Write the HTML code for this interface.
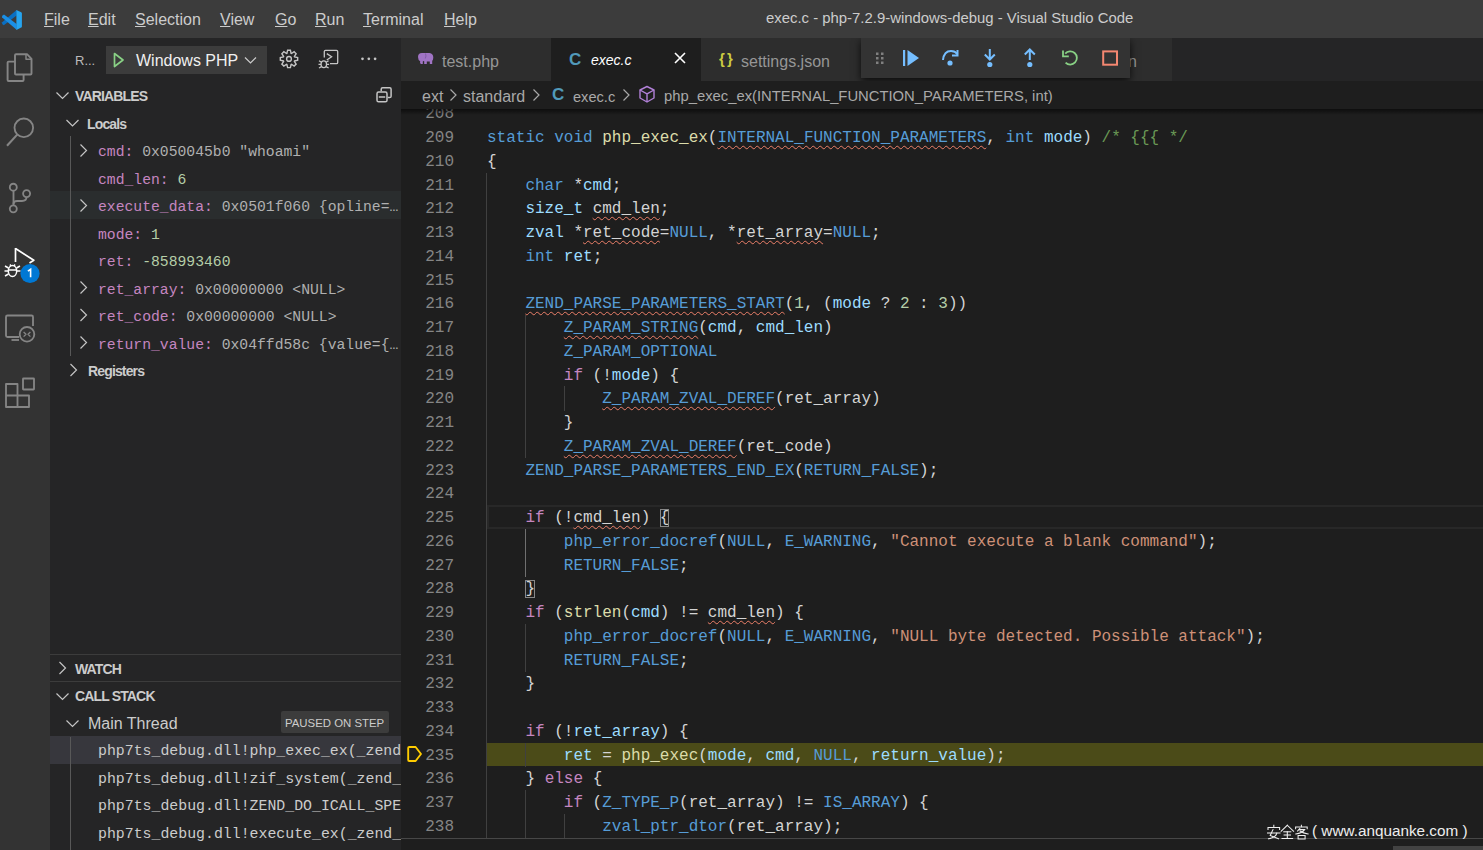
<!DOCTYPE html>
<html><head><meta charset="utf-8">
<style>
*{margin:0;padding:0;box-sizing:border-box}
html,body{width:1483px;height:850px;overflow:hidden;background:#1e1e1e}
body{position:relative;font-family:"Liberation Sans",sans-serif;color:#cccccc}
.abs{position:absolute}
svg{position:absolute;overflow:visible}
#title{left:0;top:0;width:1483px;height:38px;background:#3c3c3c}
.menu{position:absolute;top:11px;font-size:16px;line-height:17px;color:#cccccc;white-space:nowrap}
.menu u{text-decoration:underline;text-underline-offset:1px;text-decoration-thickness:1px}
#wtitle{position:absolute;top:10px;left:766px;font-size:14.9px;line-height:17px;color:#cccccc;white-space:nowrap}
#act{left:0;top:38px;width:50px;height:812px;background:#333333}
#side{left:50px;top:38px;width:351px;height:812px;background:#252526;overflow:hidden}
#editor{left:401px;top:38px;width:1082px;height:812px;background:#1e1e1e;overflow:hidden}
#tabs{left:0;top:0;width:1082px;height:43px;background:#252526}
.tab{position:absolute;top:0;height:43px;background:#2d2d2d;white-space:nowrap}
.tab.active{background:#1e1e1e}
.tabt{position:absolute;top:14.5px;font-size:16px;line-height:17px;color:#969696;white-space:nowrap}
#crumbs{left:0;top:43px;width:1082px;height:28px;background:#1e1e1e;white-space:nowrap}
.cr{position:absolute;top:7px;font-size:16px;line-height:17px;color:#a9a9a9;white-space:nowrap}
.code{font-family:"Liberation Mono",monospace;font-size:16px;white-space:pre;line-height:23.75px}
.ln{position:absolute;left:0;width:53px;text-align:right;color:#858585;height:23.75px}
.line{position:absolute;left:86px;height:23.75px}
.k{color:#569cd6}.f{color:#dcdcaa}.v{color:#9cdcfe}.p{color:#d4d4d4}.c{color:#c586c0}.n{color:#b5cea8}.s{color:#ce9178}.cm{color:#6a9955}.w{color:#d4d4d4}
.sq{text-decoration:underline wavy #ec7f69;text-decoration-thickness:1px;text-underline-offset:3px;text-decoration-skip-ink:none}
.bm{outline:1px solid #888888;outline-offset:-1px}
.hdr{position:absolute;font-weight:bold;font-size:14px;letter-spacing:-0.85px;line-height:15px;margin-top:1px;color:#cccccc;white-space:nowrap}
.row{position:absolute;left:0;width:351px;height:27.5px}
.var{position:absolute;left:48px;margin-top:3px;font-family:"Liberation Mono",monospace;font-size:14.73px;line-height:27.5px;white-space:pre}
.vn{color:#c586c0}.vv{color:#b0b0b0}.vnum{color:#b5cea8}.vp{color:#c586c0}
.frame{position:absolute;left:48px;margin-top:2px;font-family:"Liberation Mono",monospace;font-size:14.87px;line-height:27.5px;white-space:pre;color:#cccccc}
.ic{stroke:#c5c5c5;fill:none;stroke-width:1.3}
</style></head>
<body>
<div id="title" class="abs">
  <svg style="left:0;top:0" width="28" height="38" viewBox="0 0 28 38">
    <path d="M16.6 10 L2.2 22.3 Q1.6 23.3 2.6 24.4 L3.8 25.2 L16.6 15.6 Z" fill="#0a6fc2"/>
    <path d="M2.6 15.4 Q1.6 16.4 2.2 17.4 L16.6 29.8 V24 L4 14.6 Z" fill="#1a8fe6"/>
    <path d="M16.4 10 L21.2 12.3 Q21.9 12.7 21.9 13.5 V26.4 Q21.9 27.2 21.2 27.6 L16.4 29.9 Z" fill="#26a5f0"/>
  </svg>
  <div class="menu" style="left:44px"><u>F</u>ile</div>
  <div class="menu" style="left:88px"><u>E</u>dit</div>
  <div class="menu" style="left:135px"><u>S</u>election</div>
  <div class="menu" style="left:220px"><u>V</u>iew</div>
  <div class="menu" style="left:275px"><u>G</u>o</div>
  <div class="menu" style="left:315px"><u>R</u>un</div>
  <div class="menu" style="left:363px"><u>T</u>erminal</div>
  <div class="menu" style="left:444px"><u>H</u>elp</div>
  <div id="wtitle">exec.c - php-7.2.9-windows-debug - Visual Studio Code</div>
</div>

<div id="act" class="abs">
  <!-- explorer -->
  <svg style="left:0;top:0" width="50" height="400" viewBox="0 38 50 400">
    <g stroke="#858585" stroke-width="1.85" fill="none" stroke-linejoin="round">
      <path d="M15 61.6 H8.6 Q7.6 61.6 7.6 62.6 V80 Q7.6 81 8.6 81 H22.6 Q23.6 81 23.6 80 V75" stroke-width="1.9"/>
      <path d="M15 55.2 Q15 54.2 16 54.2 H27 L31.5 58.8 V73.5 Q31.5 74.5 30.5 74.5 H16 Q15 74.5 15 73.5 Z" stroke-width="1.9"/>
      <path d="M26 54.5 V59.3 H31" stroke-width="1.5"/>
      <!-- search -->
      <circle cx="23.8" cy="127.8" r="9.3"/>
      <path d="M17.2 134.6 L7 145.8" stroke-width="2.1"/>
      <!-- scm -->
      <circle cx="13.3" cy="187.2" r="3.5"/>
      <circle cx="13.3" cy="208.8" r="3.5"/>
      <circle cx="26.6" cy="193.6" r="3.5"/>
      <path d="M13.5 190.3 V205.2"/>
      <path d="M26.5 197.3 Q26.5 201 22 201 H17 Q13.5 201 13.5 204"/>
      <!-- remote explorer -->
      <path d="M19 337 H7.5 Q6 337 6 335.5 V317 Q6 315.5 7.5 315.5 H31.5 Q33 315.5 33 317 V326"/>
      <path d="M11.5 340 H19"/>
      <circle cx="27" cy="334.3" r="7.3"/>
      <path d="M23.6 332 L26 334.3 L23.6 336.6 M30.4 332 L28 334.3 L30.4 336.6" stroke-width="1.3"/>
      <!-- extensions -->
      <path d="M6 384 H17.5 V395.5 H29 V407 H6 Z M6 395.5 H17.5 V407"/>
      <rect x="23" y="378.5" width="11" height="11" rx="0.5"/>
    </g>
    <!-- debug active -->
    <g stroke="#ffffff" stroke-width="1.7" fill="none" stroke-linejoin="round">
      <path d="M15.5 248.5 L33.8 260.3 L29.5 263"/>
      <path d="M15.5 248 V262"/>
    </g>
    <g stroke="#ffffff" stroke-width="1.5" fill="none">
      <ellipse cx="12.5" cy="271" rx="4.2" ry="5.5"/>
      <path d="M8.3 270 H16.7 M5 266 L8.5 268 M5 276 L8.5 274 M20 266 L16.5 268 M4.5 271 H8 M17 271 H20.5 M10 264.5 L11 266 M15 264.5 L14 266"/>
    </g>
    <circle cx="30" cy="273.5" r="9.6" fill="#0078d4"/>
    <path d="M27.9 271.2 L30.6 269.3 V277.2" fill="none" stroke="#ffffff" stroke-width="1.6" stroke-linejoin="miter"/>
    
  </svg>
</div>

<div id="side" class="abs">
  <div class="abs" style="left:25px;top:15px;font-size:13px;line-height:15px;color:#bbbbbb">R...</div>
  <div class="abs" style="left:56px;top:8px;width:161px;height:28px;background:#3c3c3c"></div>
  <svg style="left:0;top:0" width="351" height="60">
    <path d="M64.5 15.5 L73 22 L64.5 28.5 Z" fill="none" stroke="#89d185" stroke-width="1.7" stroke-linejoin="round"/>
    <path d="M195 19.5 L200.5 25 L206 19.5" fill="none" stroke="#cccccc" stroke-width="1.2"/>
  </svg>
  <div class="abs" style="left:86px;top:14px;font-size:16px;line-height:17px;color:#f0f0f0">Windows PHP</div>
  <svg style="left:0;top:0" width="351" height="80">
    <!-- gear -->
    <g fill="none" stroke="#c5c5c5" stroke-width="1.4" stroke-linejoin="miter">
      <path d="M236.92 15.38 L237.60 12.21 L240.40 12.21 L241.08 15.38 L241.43 15.53 L244.15 13.77 L246.13 15.75 L244.37 18.47 L244.52 18.82 L247.69 19.50 L247.69 22.30 L244.52 22.98 L244.37 23.33 L246.13 26.05 L244.15 28.03 L241.43 26.27 L241.08 26.42 L240.40 29.59 L237.60 29.59 L236.92 26.42 L236.57 26.27 L233.85 28.03 L231.87 26.05 L233.63 23.33 L233.48 22.98 L230.31 22.30 L230.31 19.50 L233.48 18.82 L233.63 18.47 L231.87 15.75 L233.85 13.77 L236.57 15.53 Z"/>
      <circle cx="239" cy="20.9" r="2.4"/>
    </g>
    <!-- debug console -->
    <g fill="none" stroke="#c5c5c5" stroke-width="1.3">
      <path d="M274.3 19.5 V13.5 Q274.3 12.3 275.5 12.3 H286.5 Q287.7 12.3 287.7 13.5 V24.5 Q287.7 25.7 286.5 25.7 H280"/>
      <path d="M276.8 15.6 L281.6 18.8 L276.8 22"/>
      <ellipse cx="273.8" cy="26.3" rx="2.7" ry="3.4"/>
      <path d="M269 22.8 L271.5 24.2 M269 30 L271.5 28.6 M278.6 22.8 L276.1 24.2 M278.6 30 L276.1 28.6 M268.5 26.3 H271 M276.6 26.3 H279.1"/>
    </g>
    <!-- ellipsis -->
    <g fill="#c5c5c5"><circle cx="312.5" cy="20.8" r="1.35"/><circle cx="318.8" cy="20.8" r="1.35"/><circle cx="325.1" cy="20.8" r="1.35"/></g>
  </svg>

  <!-- VARIABLES header -->
  <div class="row" style="top:153px;background:#2a2d2e"></div>
  <svg style="left:0;top:0" width="351" height="400">
    <g fill="none" stroke="#c5c5c5" stroke-width="1.2">
      <path d="M6.5 54.5 L12.5 60.5 L18.5 54.5"/>
      <path d="M16.5 82 L22.5 88 L28.5 82"/>
      <path d="M30.5 106.5 L36.5 112.5 L30.5 118.5"/>
      <path d="M30.5 161.5 L36.5 167.5 L30.5 173.5"/>
      <path d="M30.5 243.5 L36.5 249.5 L30.5 255.5"/>
      <path d="M30.5 271.0 L36.5 277.0 L30.5 283.0"/>
      <path d="M30.5 298.5 L36.5 304.5 L30.5 310.5"/>
      <path d="M20.5 326.0 L26.5 332.0 L20.5 338.0"/>
    </g>
    <g fill="none" stroke="#c5c5c5" stroke-width="1.5">
      <rect x="327" y="54.1" width="10" height="9.7" rx="1.6"/>
      <path d="M331.2 53.3 V51.2 Q331.2 49.8 332.6 49.8 H339.7 Q341.1 49.8 341.1 51.2 V58.2 Q341.1 59.6 339.7 59.6 H337.8"/>
      <path d="M328.8 59 H335.2"/>
    </g>
    <path d="M20.5 98 V318" stroke="#585858" stroke-width="1"/>
  </svg>
  <div class="hdr" style="left:25px;top:50px">VARIABLES</div>
  <div class="hdr" style="left:37px;top:78px">Locals</div>
  <div class="var" style="top:98px"><span class="vn">cmd</span><span class="vp">: </span><span class="vv">0x050045b0 "whoami"</span></div>
  <div class="var" style="top:125.5px"><span class="vn">cmd_len</span><span class="vp">: </span><span class="vnum">6</span></div>
  <div class="var" style="top:153px"><span class="vn">execute_data</span><span class="vp">: </span><span class="vv">0x0501f060 {opline=…</span></div>
  <div class="var" style="top:180.5px"><span class="vn">mode</span><span class="vp">: </span><span class="vnum">1</span></div>
  <div class="var" style="top:208px"><span class="vn">ret</span><span class="vp">: </span><span class="vnum">-858993460</span></div>
  <div class="var" style="top:235.5px"><span class="vn">ret_array</span><span class="vp">: </span><span class="vv">0x00000000 &lt;NULL&gt;</span></div>
  <div class="var" style="top:263px"><span class="vn">ret_code</span><span class="vp">: </span><span class="vv">0x00000000 &lt;NULL&gt;</span></div>
  <div class="var" style="top:290.5px"><span class="vn">return_value</span><span class="vp">: </span><span class="vv">0x04ffd58c {value={…</span></div>
  <div class="hdr" style="left:38px;top:325px">Registers</div>

  <!-- WATCH / CALL STACK -->
  <div class="abs" style="left:0;top:616px;width:351px;height:1px;background:#3c3c3c"></div>
  <div class="abs" style="left:0;top:643px;width:351px;height:1px;background:#3c3c3c"></div>
  <svg style="left:0;top:600px" width="351" height="250" viewBox="0 638 351 250">
    <g fill="none" stroke="#c5c5c5" stroke-width="1.2">
      <path d="M9.5 662.0 L15.5 668.0 L9.5 674.0"/>
      <path d="M6.5 693.5 L12.5 699.5 L18.5 693.5"/>
      <path d="M16.5 720.5 L22.5 726.5 L28.5 720.5"/>
    </g>
    <path d="M20.5 737 V850" stroke="#585858" stroke-width="1"/>
  </svg>
  <div class="hdr" style="left:25px;top:623px">WATCH</div>
  <div class="hdr" style="left:25px;top:650px">CALL STACK</div>
  <div class="abs" style="left:38px;top:677px;font-size:16px;line-height:17px;color:#cccccc">Main Thread</div>
  <div class="abs" style="left:231px;top:673px;width:108px;height:22px;background:#3c3c3c;border-radius:2px"></div>
  <div class="abs" style="left:235px;top:679px;font-size:11.4px;line-height:13px;color:#cccccc">PAUSED ON STEP</div>
  <div class="row" style="top:698px;background:#37373d"></div>
  <svg style="left:0;top:0" width="351" height="812"><path d="M20.5 699 V812" stroke="#585858" stroke-width="1"/></svg>
  <div class="frame" style="top:698px">php7ts_debug.dll!php_exec_ex(_zend</div>
  <div class="frame" style="top:725.5px">php7ts_debug.dll!zif_system(_zend_</div>
  <div class="frame" style="top:753px">php7ts_debug.dll!ZEND_DO_ICALL_SPE</div>
  <div class="frame" style="top:780.5px">php7ts_debug.dll!execute_ex(_zend_</div>
</div>

<div id="editor" class="abs">
  <div id="tabs" class="abs">
    <div class="tab" style="left:0;width:150px">
      <svg style="left:0;top:0" width="150" height="43">
        <path d="M17 19 Q17 15 21 15 H28.5 Q32.3 15.5 32.3 19.5 Q32.3 21.5 31.2 23 V26 H28.8 V23.6 H25.8 V26 H23.2 V23.2 Q22.3 22.8 21.8 23.4 V26 H19.8 Q18.6 25 19.2 23.3 Q17 22 17 19 Z" fill="#a074c4"/><path d="M24.5 15.5 Q25.6 18 24.3 20.5" stroke="#7a55a0" stroke-width="0.8" fill="none"/>
      </svg>
      <div class="tabt" style="left:41px">test.php</div>
    </div>
    <div class="tab active" style="left:150px;width:150px">
      <div class="abs" style="left:18px;top:13px;font-size:17px;line-height:18px;font-weight:bold;color:#519aba">C</div>
      <div class="tabt" style="left:40px;font-style:italic;font-size:14px;top:14px;color:#ffffff">exec.c</div>
      <svg style="left:0;top:0" width="150" height="43">
        <path d="M274 15 L284 25 M284 15 L274 25" transform="translate(-150,0)" stroke="#ffffff" stroke-width="1.6"/>
      </svg>
    </div>
    <div class="tab" style="left:300px;width:150px">
      <div class="abs" style="left:18px;top:12px;font-size:15px;line-height:17px;font-weight:bold;color:#cbcb41;letter-spacing:-1px">{ }</div>
      <div class="tabt" style="left:40px">settings.json</div>
    </div>
    <div class="tab" style="left:450px;width:321px">
      <div class="tabt" style="left:277px">n</div>
    </div>
    <!-- debug toolbar -->
    <div class="abs" style="left:460px;top:0;width:269px;height:40px;background:#333333;box-shadow:0 3px 8px rgba(0,0,0,0.75)">
      <svg style="left:0;top:0" width="269" height="40" viewBox="861 38 269 40">
        <g fill="#808080"><rect x="876" y="52.5" width="2.5" height="2.5"/><rect x="881" y="52.5" width="2.5" height="2.5"/><rect x="876" y="57" width="2.5" height="2.5"/><rect x="881" y="57" width="2.5" height="2.5"/><rect x="876" y="61.5" width="2.5" height="2.5"/><rect x="881" y="61.5" width="2.5" height="2.5"/></g>
        <g fill="#75beff" stroke="none">
          <rect x="903" y="50" width="2.2" height="16"/>
          <path d="M907.5 50 L919 58 L907.5 66 Z"/>
          <circle cx="950" cy="63" r="2.6"/>
          <circle cx="989.8" cy="64.5" r="2.6"/>
          <circle cx="1029.8" cy="64.5" r="2.6"/>
        </g>
        <g fill="none" stroke="#75beff" stroke-width="2">
          <path d="M943 60 Q944 51 951 51 Q955 51 957.5 54"/>
          <path d="M957.5 50 V55.5 H952"/>
          <path d="M989.8 49 V59.5 M984.8 54.5 L989.8 59.5 L994.8 54.5"/>
          <path d="M1029.8 60 V49.5 M1024.8 54.5 L1029.8 49.5 L1034.8 54.5"/>
        </g>
        <g fill="none" stroke="#89d185" stroke-width="1.8">
          <path d="M1065.6 62.6 A6.6 6.6 0 1 0 1065.2 53.7"/>
          <path d="M1063 50.5 V56.3 H1068.8"/>
        </g>
        <rect x="1103.2" y="51.4" width="13.8" height="13.3" fill="none" stroke="#f48771" stroke-width="2"/>
      </svg>
    </div>
  </div>
  <div id="crumbs" class="abs">
    <div class="cr" style="left:21px">ext</div>
    <svg style="left:0;top:0" width="300" height="27"><g fill="none" stroke="#a9a9a9" stroke-width="1.2"><path d="M49.5 8.5 L55 14 L49.5 19.5"/><path d="M132.5 8.5 L138 14 L132.5 19.5"/><path d="M222.5 8.5 L228 14 L222.5 19.5"/></g></svg>
    <div class="cr" style="left:62px">standard</div>
    <div class="abs" style="left:151px;top:5px;font-size:17px;line-height:18px;font-weight:bold;color:#519aba">C</div>
    <div class="cr" style="left:172px;font-size:14.6px;top:7.5px">exec.c</div>
    <svg style="left:0;top:0" width="300" height="27">
      <g fill="none" stroke="#b180d7" stroke-width="1.4" stroke-linejoin="round">
        <path d="M246 5.5 L253 9 V17 L246 21 L239 17 V9 Z"/>
        <path d="M239 9 L246 12.8 L253 9 M246 12.8 V21"/>
      </g>
    </svg>
    <div class="cr" style="left:263px;font-size:14.8px">php_exec_ex(INTERNAL_FUNCTION_PARAMETERS, int)</div>
  </div>
  <div class="abs" style="left:0;top:71px;width:1082px;height:741px;overflow:hidden">
    <div class="abs" style="left:0;top:0;width:1082px;height:6px;background:linear-gradient(rgba(0,0,0,0.55),rgba(0,0,0,0));z-index:5"></div>
    <div class="abs" style="left:0;top:-71px;width:1082px;height:812px">
<div class="abs" style="left:85px;top:704.500px;width:1000px;height:23.75px;background:#4b4b18"></div>
<div class="abs" style="left:86px;top:467.000px;width:1000px;height:23.75px;border:2px solid #282828;border-right:none"></div>
<div class="abs" style="left:85.0px;top:134.500px;width:1px;height:24.25px;background:#404040"></div>
<div class="abs" style="left:85.0px;top:158.250px;width:1px;height:24.25px;background:#404040"></div>
<div class="abs" style="left:85.0px;top:182.000px;width:1px;height:24.25px;background:#404040"></div>
<div class="abs" style="left:85.0px;top:205.750px;width:1px;height:24.25px;background:#404040"></div>
<div class="abs" style="left:85.0px;top:229.500px;width:1px;height:24.25px;background:#404040"></div>
<div class="abs" style="left:85.0px;top:253.250px;width:1px;height:24.25px;background:#404040"></div>
<div class="abs" style="left:85.0px;top:277.000px;width:1px;height:24.25px;background:#404040"></div>
<div class="abs" style="left:124.4px;top:277.000px;width:1px;height:24.25px;background:#404040"></div>
<div class="abs" style="left:85.0px;top:300.750px;width:1px;height:24.25px;background:#404040"></div>
<div class="abs" style="left:124.4px;top:300.750px;width:1px;height:24.25px;background:#404040"></div>
<div class="abs" style="left:85.0px;top:324.500px;width:1px;height:24.25px;background:#404040"></div>
<div class="abs" style="left:124.4px;top:324.500px;width:1px;height:24.25px;background:#404040"></div>
<div class="abs" style="left:85.0px;top:348.250px;width:1px;height:24.25px;background:#404040"></div>
<div class="abs" style="left:124.4px;top:348.250px;width:1px;height:24.25px;background:#404040"></div>
<div class="abs" style="left:162.8px;top:348.250px;width:1px;height:24.25px;background:#404040"></div>
<div class="abs" style="left:85.0px;top:372.000px;width:1px;height:24.25px;background:#404040"></div>
<div class="abs" style="left:124.4px;top:372.000px;width:1px;height:24.25px;background:#404040"></div>
<div class="abs" style="left:85.0px;top:395.750px;width:1px;height:24.25px;background:#404040"></div>
<div class="abs" style="left:124.4px;top:395.750px;width:1px;height:24.25px;background:#404040"></div>
<div class="abs" style="left:85.0px;top:419.500px;width:1px;height:24.25px;background:#404040"></div>
<div class="abs" style="left:85.0px;top:443.250px;width:1px;height:24.25px;background:#404040"></div>
<div class="abs" style="left:85.0px;top:467.000px;width:1px;height:24.25px;background:#404040"></div>
<div class="abs" style="left:85.0px;top:490.750px;width:1px;height:24.25px;background:#404040"></div>
<div class="abs" style="left:124.4px;top:490.750px;width:1px;height:24.25px;background:#707070"></div>
<div class="abs" style="left:85.0px;top:514.500px;width:1px;height:24.25px;background:#404040"></div>
<div class="abs" style="left:124.4px;top:514.500px;width:1px;height:24.25px;background:#707070"></div>
<div class="abs" style="left:85.0px;top:538.250px;width:1px;height:24.25px;background:#404040"></div>
<div class="abs" style="left:85.0px;top:562.000px;width:1px;height:24.25px;background:#404040"></div>
<div class="abs" style="left:85.0px;top:585.750px;width:1px;height:24.25px;background:#404040"></div>
<div class="abs" style="left:124.4px;top:585.750px;width:1px;height:24.25px;background:#404040"></div>
<div class="abs" style="left:85.0px;top:609.500px;width:1px;height:24.25px;background:#404040"></div>
<div class="abs" style="left:124.4px;top:609.500px;width:1px;height:24.25px;background:#404040"></div>
<div class="abs" style="left:85.0px;top:633.250px;width:1px;height:24.25px;background:#404040"></div>
<div class="abs" style="left:85.0px;top:657.000px;width:1px;height:24.25px;background:#404040"></div>
<div class="abs" style="left:85.0px;top:680.750px;width:1px;height:24.25px;background:#404040"></div>
<div class="abs" style="left:85.0px;top:704.500px;width:1px;height:24.25px;background:#404040"></div>
<div class="abs" style="left:124.4px;top:704.500px;width:1px;height:24.25px;background:#404040"></div>
<div class="abs" style="left:85.0px;top:728.250px;width:1px;height:24.25px;background:#404040"></div>
<div class="abs" style="left:85.0px;top:752.000px;width:1px;height:24.25px;background:#404040"></div>
<div class="abs" style="left:124.4px;top:752.000px;width:1px;height:24.25px;background:#404040"></div>
<div class="abs" style="left:85.0px;top:775.750px;width:1px;height:24.25px;background:#404040"></div>
<div class="abs" style="left:124.4px;top:775.750px;width:1px;height:24.25px;background:#404040"></div>
<div class="abs" style="left:162.8px;top:775.750px;width:1px;height:24.25px;background:#404040"></div>
<div class="ln code" style="top:65.250px">208</div>
<div class="ln code" style="top:89.000px">209</div>
<div class="line code" style="top:89.000px"><span class="k">static</span><span class="p"> </span><span class="k">void</span><span class="p"> </span><span class="f">php_exec_ex</span><span class="p">(</span><span class="k sq">INTERNAL_FUNCTION_PARAMETERS</span><span class="p">, </span><span class="k">int</span><span class="p"> </span><span class="v">mode</span><span class="p">) </span><span class="cm">/* {{{ */</span></div>
<div class="ln code" style="top:112.750px">210</div>
<div class="line code" style="top:112.750px"><span class="p">{</span></div>
<div class="ln code" style="top:136.500px">211</div>
<div class="line code" style="top:136.500px"><span class="p">    </span><span class="k">char</span><span class="p"> *</span><span class="v">cmd</span><span class="p">;</span></div>
<div class="ln code" style="top:160.250px">212</div>
<div class="line code" style="top:160.250px"><span class="p">    </span><span class="v">size_t</span><span class="p"> </span><span class="w sq">cmd_len</span><span class="p">;</span></div>
<div class="ln code" style="top:184.000px">213</div>
<div class="line code" style="top:184.000px"><span class="p">    </span><span class="v">zval</span><span class="p"> *</span><span class="w sq">ret_code</span><span class="p">=</span><span class="k">NULL</span><span class="p">, *</span><span class="w sq">ret_array</span><span class="p">=</span><span class="k">NULL</span><span class="p">;</span></div>
<div class="ln code" style="top:207.750px">214</div>
<div class="line code" style="top:207.750px"><span class="p">    </span><span class="k">int</span><span class="p"> </span><span class="v">ret</span><span class="p">;</span></div>
<div class="ln code" style="top:231.500px">215</div>
<div class="ln code" style="top:255.250px">216</div>
<div class="line code" style="top:255.250px"><span class="p">    </span><span class="k sq">ZEND_PARSE_PARAMETERS_START</span><span class="p">(</span><span class="n">1</span><span class="p">, (</span><span class="v">mode</span><span class="p"> ? </span><span class="n">2</span><span class="p"> : </span><span class="n">3</span><span class="p">))</span></div>
<div class="ln code" style="top:279.000px">217</div>
<div class="line code" style="top:279.000px"><span class="p">        </span><span class="k sq">Z_PARAM_STRING</span><span class="p">(</span><span class="v">cmd</span><span class="p">, </span><span class="v">cmd_len</span><span class="p">)</span></div>
<div class="ln code" style="top:302.750px">218</div>
<div class="line code" style="top:302.750px"><span class="p">        </span><span class="k">Z_PARAM_OPTIONAL</span></div>
<div class="ln code" style="top:326.500px">219</div>
<div class="line code" style="top:326.500px"><span class="p">        </span><span class="c">if</span><span class="p"> (!</span><span class="v">mode</span><span class="p">) {</span></div>
<div class="ln code" style="top:350.250px">220</div>
<div class="line code" style="top:350.250px"><span class="p">            </span><span class="k sq">Z_PARAM_ZVAL_DEREF</span><span class="p">(</span><span class="w">ret_array</span><span class="p">)</span></div>
<div class="ln code" style="top:374.000px">221</div>
<div class="line code" style="top:374.000px"><span class="p">        </span><span class="p">}</span></div>
<div class="ln code" style="top:397.750px">222</div>
<div class="line code" style="top:397.750px"><span class="p">        </span><span class="k sq">Z_PARAM_ZVAL_DEREF</span><span class="p">(</span><span class="w">ret_code</span><span class="p">)</span></div>
<div class="ln code" style="top:421.500px">223</div>
<div class="line code" style="top:421.500px"><span class="p">    </span><span class="k">ZEND_PARSE_PARAMETERS_END_EX</span><span class="p">(</span><span class="k">RETURN_FALSE</span><span class="p">);</span></div>
<div class="ln code" style="top:445.250px">224</div>
<div class="ln code" style="top:469.000px">225</div>
<div class="line code" style="top:469.000px"><span class="p">    </span><span class="c">if</span><span class="p"> (!</span><span class="w sq">cmd_len</span><span class="p">) </span><span class="p bm">{</span></div>
<div class="ln code" style="top:492.750px">226</div>
<div class="line code" style="top:492.750px"><span class="p">        </span><span class="k">php_error_docref</span><span class="p">(</span><span class="k">NULL</span><span class="p">, </span><span class="k">E_WARNING</span><span class="p">, </span><span class="s">&quot;Cannot execute a blank command&quot;</span><span class="p">);</span></div>
<div class="ln code" style="top:516.500px">227</div>
<div class="line code" style="top:516.500px"><span class="p">        </span><span class="k">RETURN_FALSE</span><span class="p">;</span></div>
<div class="ln code" style="top:540.250px">228</div>
<div class="line code" style="top:540.250px"><span class="p">    </span><span class="p bm">}</span></div>
<div class="ln code" style="top:564.000px">229</div>
<div class="line code" style="top:564.000px"><span class="p">    </span><span class="c">if</span><span class="p"> (</span><span class="f">strlen</span><span class="p">(</span><span class="v">cmd</span><span class="p">) != </span><span class="w sq">cmd_len</span><span class="p">) {</span></div>
<div class="ln code" style="top:587.750px">230</div>
<div class="line code" style="top:587.750px"><span class="p">        </span><span class="k">php_error_docref</span><span class="p">(</span><span class="k">NULL</span><span class="p">, </span><span class="k">E_WARNING</span><span class="p">, </span><span class="s">&quot;NULL byte detected. Possible attack&quot;</span><span class="p">);</span></div>
<div class="ln code" style="top:611.500px">231</div>
<div class="line code" style="top:611.500px"><span class="p">        </span><span class="k">RETURN_FALSE</span><span class="p">;</span></div>
<div class="ln code" style="top:635.250px">232</div>
<div class="line code" style="top:635.250px"><span class="p">    </span><span class="p">}</span></div>
<div class="ln code" style="top:659.000px">233</div>
<div class="ln code" style="top:682.750px">234</div>
<div class="line code" style="top:682.750px"><span class="p">    </span><span class="c">if</span><span class="p"> (!</span><span class="v">ret_array</span><span class="p">) {</span></div>
<div class="ln code" style="top:706.500px">235</div>
<div class="line code" style="top:706.500px"><span class="p">        </span><span class="v">ret</span><span class="p"> = </span><span class="f">php_exec</span><span class="p">(</span><span class="v">mode</span><span class="p">, </span><span class="v">cmd</span><span class="p">, </span><span class="k">NULL</span><span class="p">, </span><span class="v">return_value</span><span class="p">);</span></div>
<div class="ln code" style="top:730.250px">236</div>
<div class="line code" style="top:730.250px"><span class="p">    </span><span class="p">}</span><span class="p"> </span><span class="c">else</span><span class="p"> {</span></div>
<div class="ln code" style="top:754.000px">237</div>
<div class="line code" style="top:754.000px"><span class="p">        </span><span class="c">if</span><span class="p"> (</span><span class="k">Z_TYPE_P</span><span class="p">(</span><span class="w">ret_array</span><span class="p">) != </span><span class="k">IS_ARRAY</span><span class="p">) {</span></div>
<div class="ln code" style="top:777.750px">238</div>
<div class="line code" style="top:777.750px"><span class="p">            </span><span class="k">zval_ptr_dtor</span><span class="p">(</span><span class="w">ret_array</span><span class="p">);</span></div>
    </div>
    <!-- breakpoint arrow -->
    <svg style="left:0;top:-71px;z-index:3" width="60" height="812" viewBox="401 38 60 812">
      <path d="M408.2 748 Q408.2 747 409.2 747 H415.6 L421 754 L415.6 761 H409.2 Q408.2 761 408.2 760 Z" fill="none" stroke="#ffcc00" stroke-width="1.9" stroke-linejoin="round"/>
    </svg>
    <div class="abs" style="left:0;top:729px;width:1082px;height:1px;background:#474747;z-index:4"></div>
    <div class="abs" style="left:992px;top:737px;width:90px;height:4px;background:#424242;z-index:4"></div>
  </div>
</div>
<svg style="left:1267px;top:825px;z-index:10" width="42" height="15" viewBox="0 0 42 15">
  <g fill="none" stroke="#eeeeee" stroke-width="1.05" stroke-linecap="square">
    <path d="M6.8 0.3 V2"/><path d="M1 4.5 V2.4 H12.6 V4.5"/>
    <path d="M0.5 8 H13"/><path d="M6 4.6 L3.2 10.4 Q6 11.5 11.5 13.7"/><path d="M9.8 8.2 Q9 12.5 1.5 13.8"/>
    <g transform="translate(13.8,0)"><path d="M6.5 0.3 L0.3 6.2"/><path d="M6.5 0.3 L12.8 6.2"/><path d="M3 6.8 H10"/><path d="M3.3 10 H9.7"/><path d="M1.2 13.5 H11.8"/><path d="M6.5 6.8 V13.5"/></g>
    <g transform="translate(27.6,0)"><path d="M6.8 0.2 V1.6"/><path d="M1 3.8 V2 H12.6 V3.8"/><path d="M5.2 3.4 L3 6"/><path d="M4.8 4.6 H10 Q7.5 8 1.2 9"/><path d="M5.5 6 Q8.5 8.3 13.5 9"/><path d="M3.5 10.4 V14 H10.5 V10.4 Z"/></g>
  </g>
</svg>
<div class="abs" style="left:1312px;top:822px;font-size:15.3px;line-height:17px;color:#eeeeee;white-space:nowrap;z-index:10">( www.anquanke.com )</div>
</body></html>
